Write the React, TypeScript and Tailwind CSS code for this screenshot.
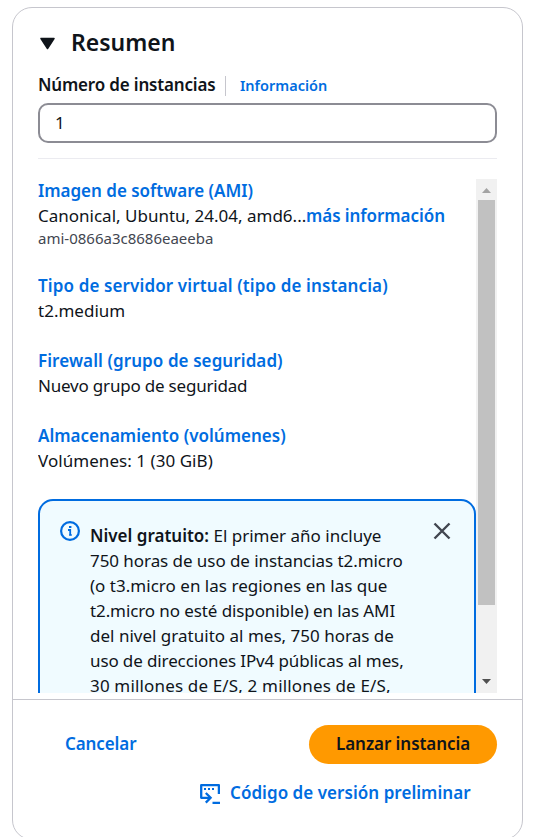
import React from "react";

const INFO = [
  { title: "Tipo de servidor virtual (tipo de instancia)", value: "t2.medium", tt: "tracking-[0.12px]", vt: "tracking-[0.01px]" },
  { title: "Firewall (grupo de seguridad)", value: "Nuevo grupo de seguridad", tt: "tracking-[0.08px]", vt: "tracking-[-0.2px]" },
  { title: "Almacenamiento (volúmenes)", value: "Volúmenes: 1 (30 GiB)", tt: "tracking-[0.01px]", vt: "tracking-[0.05px]" },
];

const NOTICE = [
  { text: "750 horas de uso de instancias t2.micro", t: "tracking-[-0.06px]" },
  { text: "(o t3.micro en las regiones en las que", t: "tracking-[0.02px]" },
  { text: "t2.micro no esté disponible) en las AMI", t: "tracking-[-0.1px]" },
  { text: "del nivel gratuito al mes, 750 horas de", t: "tracking-[0.01px]" },
  { text: "uso de direcciones IPv4 públicas al mes,", t: "tracking-[-0.12px]" },
  { text: "30 millones de E/S, 2 millones de E/S,", t: "tracking-[0.16px]" },
];

function Scrollbar() {
  return (
    <div className="flex w-[21px] shrink-0 flex-col items-center bg-[#f1f1f1]">
      <svg className="h-[21px] w-[21px] shrink-0" viewBox="0 0 21 21">
        <path d="M6 14h9l-4.500-5z" fill="#a3a3a3" />
      </svg>
      <div className="h-[405px] w-[17px] bg-[#c1c1c1]" />
      <div className="flex-1" />
      <svg className="h-[21px] w-[21px] shrink-0" viewBox="0 0 21 21">
        <path d="M6 7h9l-4.500 5z" fill="#505050" />
      </svg>
    </div>
  );
}

export default function App() {
  return (
    <div className="h-[837px] w-[547px] overflow-hidden bg-white pt-[7px] pl-3 font-['Noto_Sans',sans-serif] text-[17px] leading-[25px] whitespace-nowrap text-[#0f141a]">
      <div className="flex h-[833px] w-[511px] flex-col rounded-[20px] border border-[#c6c6cd]">
        <div className="flex flex-col px-[25px]">
          <div className="mt-[21px] flex h-[28px] items-center">
            <svg className="mt-px mr-[15px] ml-px h-[13px] w-[17px]" viewBox="0 0 17 13">
              <path d="M2 1.500h13L8.500 11.500z" fill="#0f141a" stroke="#0f141a" strokeWidth="1.500" strokeLinejoin="round" />
            </svg>
            <h2 className="-mt-0.5 text-[23px] font-semibold">Resumen</h2>
          </div>
          <div className="mt-[19px] flex h-[20px] items-center">
            <span className="-mt-1 w-[187px] font-semibold tracking-[-0.18px]">Número de instancias</span>
            <span className="h-[20px] w-px bg-[#c6c6cd]" />
            <span className="-mt-0.5 ml-[14px] text-[14.500px] font-semibold text-[#006ce0]">Información</span>
          </div>
          <div className="mt-[7px] flex h-[40px] items-center rounded-[10px] border-2 border-[#8c8c94] pb-0.5 pl-[15px]">1</div>
          <div className="mt-[15px] h-px bg-[#ebebf0]" />
        </div>
        <div className="mx-[25px] mt-5 flex h-[514px] shrink-0 overflow-hidden">
          <div className="flex w-[438px] shrink-0 flex-col">
            <div className="-mt-px flex flex-col">
              <span className="font-semibold tracking-[-0.02px] text-[#006ce0]">Imagen de software (AMI)</span>
              <span className="flex">
                <span className="w-[268px]">Canonical, Ubuntu, 24.04, amd6...</span>
                <span className="font-semibold tracking-[-0.06px] text-[#006ce0]">más información</span>
              </span>
              <span className="text-[15px] leading-5 text-[#424650]">ami-0866a3c8686eaeeba</span>
            </div>
            {INFO.map((i) => (
              <div key={i.title} className="mt-[25px] flex flex-col">
                <span className={"font-semibold text-[#006ce0] " + i.tt}>{i.title}</span>
                <span className={i.vt}>{i.value}</span>
              </div>
            ))}
            <div className="mt-[26px] flex h-[240px] shrink-0 rounded-[15px] border-2 border-[#006ce0] bg-[#f0fbff] pt-5 pl-5">
              <svg className="mr-[10px] h-5 w-5" viewBox="0 0 20 20" fill="none" stroke="#006ce0" strokeWidth="2.200">
                <circle cx="10" cy="10" r="8.900" />
                <path d="M8 9h2.200v5.500" strokeWidth="1.800" />
                <path d="M9 6h2.400" strokeWidth="2" />
                <path d="M9 14h3" strokeWidth="1.200" />
              </svg>
              <div className="w-[343px] pt-0.5">
                <div><b className="font-semibold">Nivel gratuito:</b> El primer año incluye</div>
                {NOTICE.map((l) => <div key={l.text} className={l.t}>{l.text}</div>)}
              </div>
              <svg className="mt-px h-[18px] w-[18px]" viewBox="0 0 18 18" fill="none" stroke="#424650" strokeWidth="2.400">
                <path d="M1.500 1.500l15 15M16.500 1.500l-15 15" />
              </svg>
            </div>
          </div>
          <Scrollbar />
        </div>
        <div className="mt-[6px] flex flex-col border-t border-[#c6c6cd] px-[25px] pt-[25px] font-semibold text-[#006ce0]">
          <div className="flex h-[39px] items-center justify-between">
            <span className="-mt-0.5 ml-[27px] tracking-[-0.1px]">Cancelar</span>
            <span className="flex h-[39px] w-[188px] items-center rounded-full bg-[#ff9900] pb-0.5 pl-[27px] tracking-[-0.06px] text-[#0f141a]">Lanzar instancia</span>
          </div>
          <div className="mt-4 ml-[162px] flex h-[25px] items-center">
            <svg className="mt-0.5 mr-[10px] h-5 w-5" viewBox="0 0 20 20" fill="none" stroke="#006ce0" strokeWidth="2.300">
              <path d="M18.900 10V1.200H1.200V13.800H10" strokeLinejoin="round" />
              <path d="M5.800 9l4.800 4.800-4.800 4.800M12.500 18.800H20" />
              <path d="M4 5h2M8 5h2M12 5h2" strokeWidth="2" />
            </svg>
            <span className="tracking-[0.04px]">Código de versión preliminar</span>
          </div>
        </div>
      </div>
    </div>
  );
}
